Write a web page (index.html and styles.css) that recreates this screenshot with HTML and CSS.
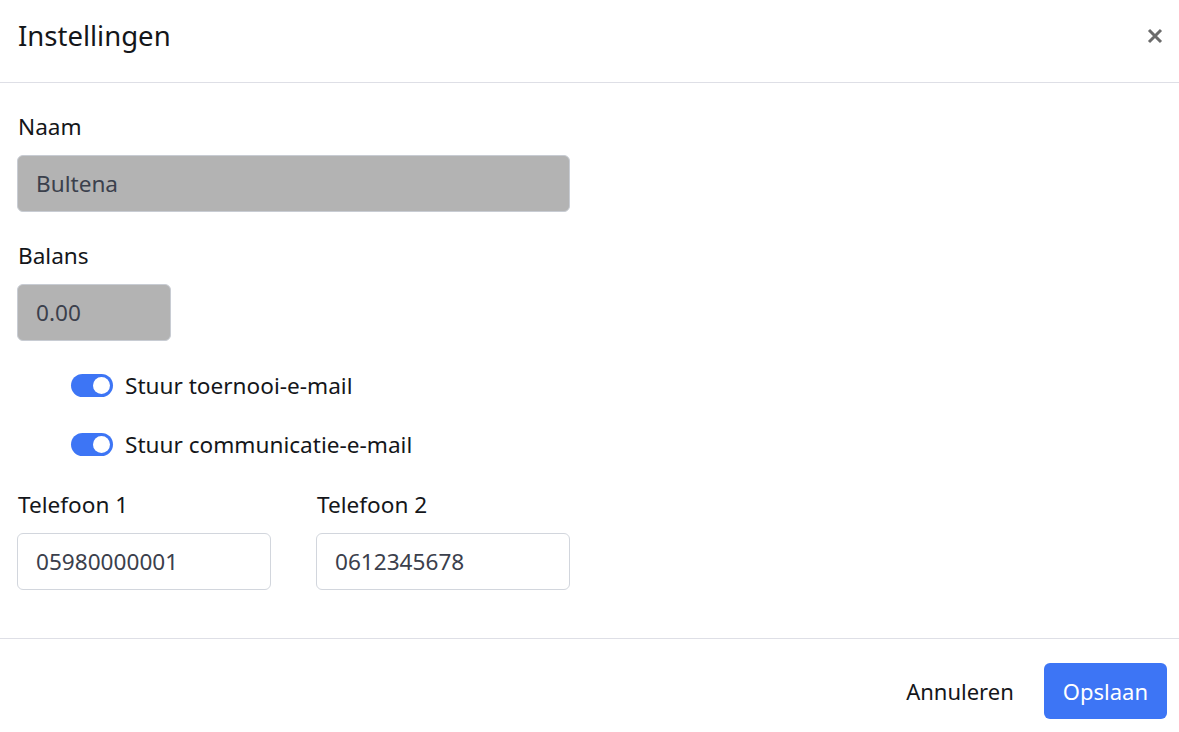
FILE: index.html
```html
<!DOCTYPE html>
<html lang="nl">
<head>
    <meta charset="UTF-8">
    <meta name="viewport" content="width=device-width, initial-scale=1.0">
    <title>Instellingen</title>
    <link rel="stylesheet" href="styles.css">
</head>
<body>
    <div class="modal-card">
        <header class="modal-head">
            <p class="modal-title">Instellingen</p>
            <button class="close" aria-label="close">
                <svg viewBox="0 0 16 16" width="16" height="16">
                    <path d="M2 2 L14 14 M14 2 L2 14" stroke="#6b6b6b" stroke-width="3" stroke-linecap="butt"/>
                </svg>
            </button>
        </header>

        <section class="modal-body">
            <div class="field">
                <label class="label">Naam</label>
                <input class="input wide" type="text" value="Bultena" disabled>
            </div>

            <div class="field">
                <label class="label">Balans</label>
                <input class="input small" type="text" value="0.00" disabled>
            </div>

            <div class="field switch-row">
                <span class="switch"><span class="knob"></span></span>
                <span class="switch-label">Stuur toernooi-e-mail</span>
            </div>

            <div class="field switch-row last">
                <span class="switch"><span class="knob"></span></span>
                <span class="switch-label">Stuur communicatie-e-mail</span>
            </div>

            <div class="field columns">
                <div class="column">
                    <label class="label">Telefoon 1</label>
                    <input class="input" type="text" value="05980000001">
                </div>
                <div class="column">
                    <label class="label">Telefoon 2</label>
                    <input class="input" type="text" value="0612345678">
                </div>
            </div>
        </section>

        <footer class="modal-foot">
            <button class="button text">Annuleren</button>
            <button class="button primary">Opslaan</button>
        </footer>
    </div>
</body>
</html>
```

FILE: styles.css
```css
body {
    margin: 0;
    padding: 0;
    background-color: #fff;
    font-family: 'Noto Sans', 'Open Sans', sans-serif;
    font-size: 22.6px;
    color: #14161a;
    overflow: hidden;
}

.modal-card {
    width: 1179px;
    display: flex;
    flex-direction: column;
}

.modal-head {
    height: 82px;
    border-bottom: 1px solid #dedfe6;
    display: flex;
    align-items: center;
    justify-content: space-between;
    padding: 0 16px 0 18px;
    box-sizing: content-box;
}

.modal-title {
    margin: 0;
    font-size: 27.5px;
    line-height: 1;
    color: #14161a;
    position: relative;
    top: -5px;
}

.close {
    background: none;
    border: none;
    padding: 0;
    width: 16px;
    height: 16px;
    cursor: pointer;
    position: relative;
    top: -5px;
}

.close svg {
    display: block;
}

.modal-body {
    padding: 29px 17px 19px;
    height: 507px;
}

.field {
    margin-bottom: 29px;
}

.label {
    display: block;
    line-height: 30px;
    margin-bottom: 13px;
    padding-left: 1px;
}

.input {
    display: block;
    box-sizing: border-box;
    width: 254px;
    height: 57px;
    padding: 0 18px;
    border: 1px solid #d2d6dd;
    border-radius: 6px;
    font-family: inherit;
    font-size: 22.6px;
    color: #3b404c;
    background-color: #fff;
}

.input:disabled {
    background-color: #b3b3b3;
    border-color: #c8ccd3;
    color: #3b404c;
}

.input.wide {
    width: 553px;
}

.input.small {
    width: 154px;
}

.switch-row {
    display: flex;
    align-items: center;
    height: 30px;
    margin-left: 54px;
}

.switch-row.last {
    margin-bottom: 31px;
}

.switch {
    width: 42px;
    height: 23px;
    border-radius: 12px;
    background-color: #3d75f5;
    position: relative;
    margin-right: 12px;
    flex-shrink: 0;
}

.knob {
    position: absolute;
    top: 3px;
    right: 3px;
    width: 17px;
    height: 17px;
    border-radius: 50%;
    background-color: #fff;
}

.columns {
    display: flex;
    gap: 45px;
}

.modal-foot {
    border-top: 1px solid #dedfe6;
    display: flex;
    justify-content: flex-end;
    align-items: flex-start;
    gap: 11px;
    padding: 24px 12px 20px;
}

.button {
    font-family: inherit;
    font-size: 22px;
    height: 56px;
    border: none;
    border-radius: 6px;
    padding: 0 19px;
    cursor: pointer;
}

.button.text {
    background: none;
    color: #14161a;
}

.button.primary {
    background-color: #3d75f5;
    color: #fff;
}
```
